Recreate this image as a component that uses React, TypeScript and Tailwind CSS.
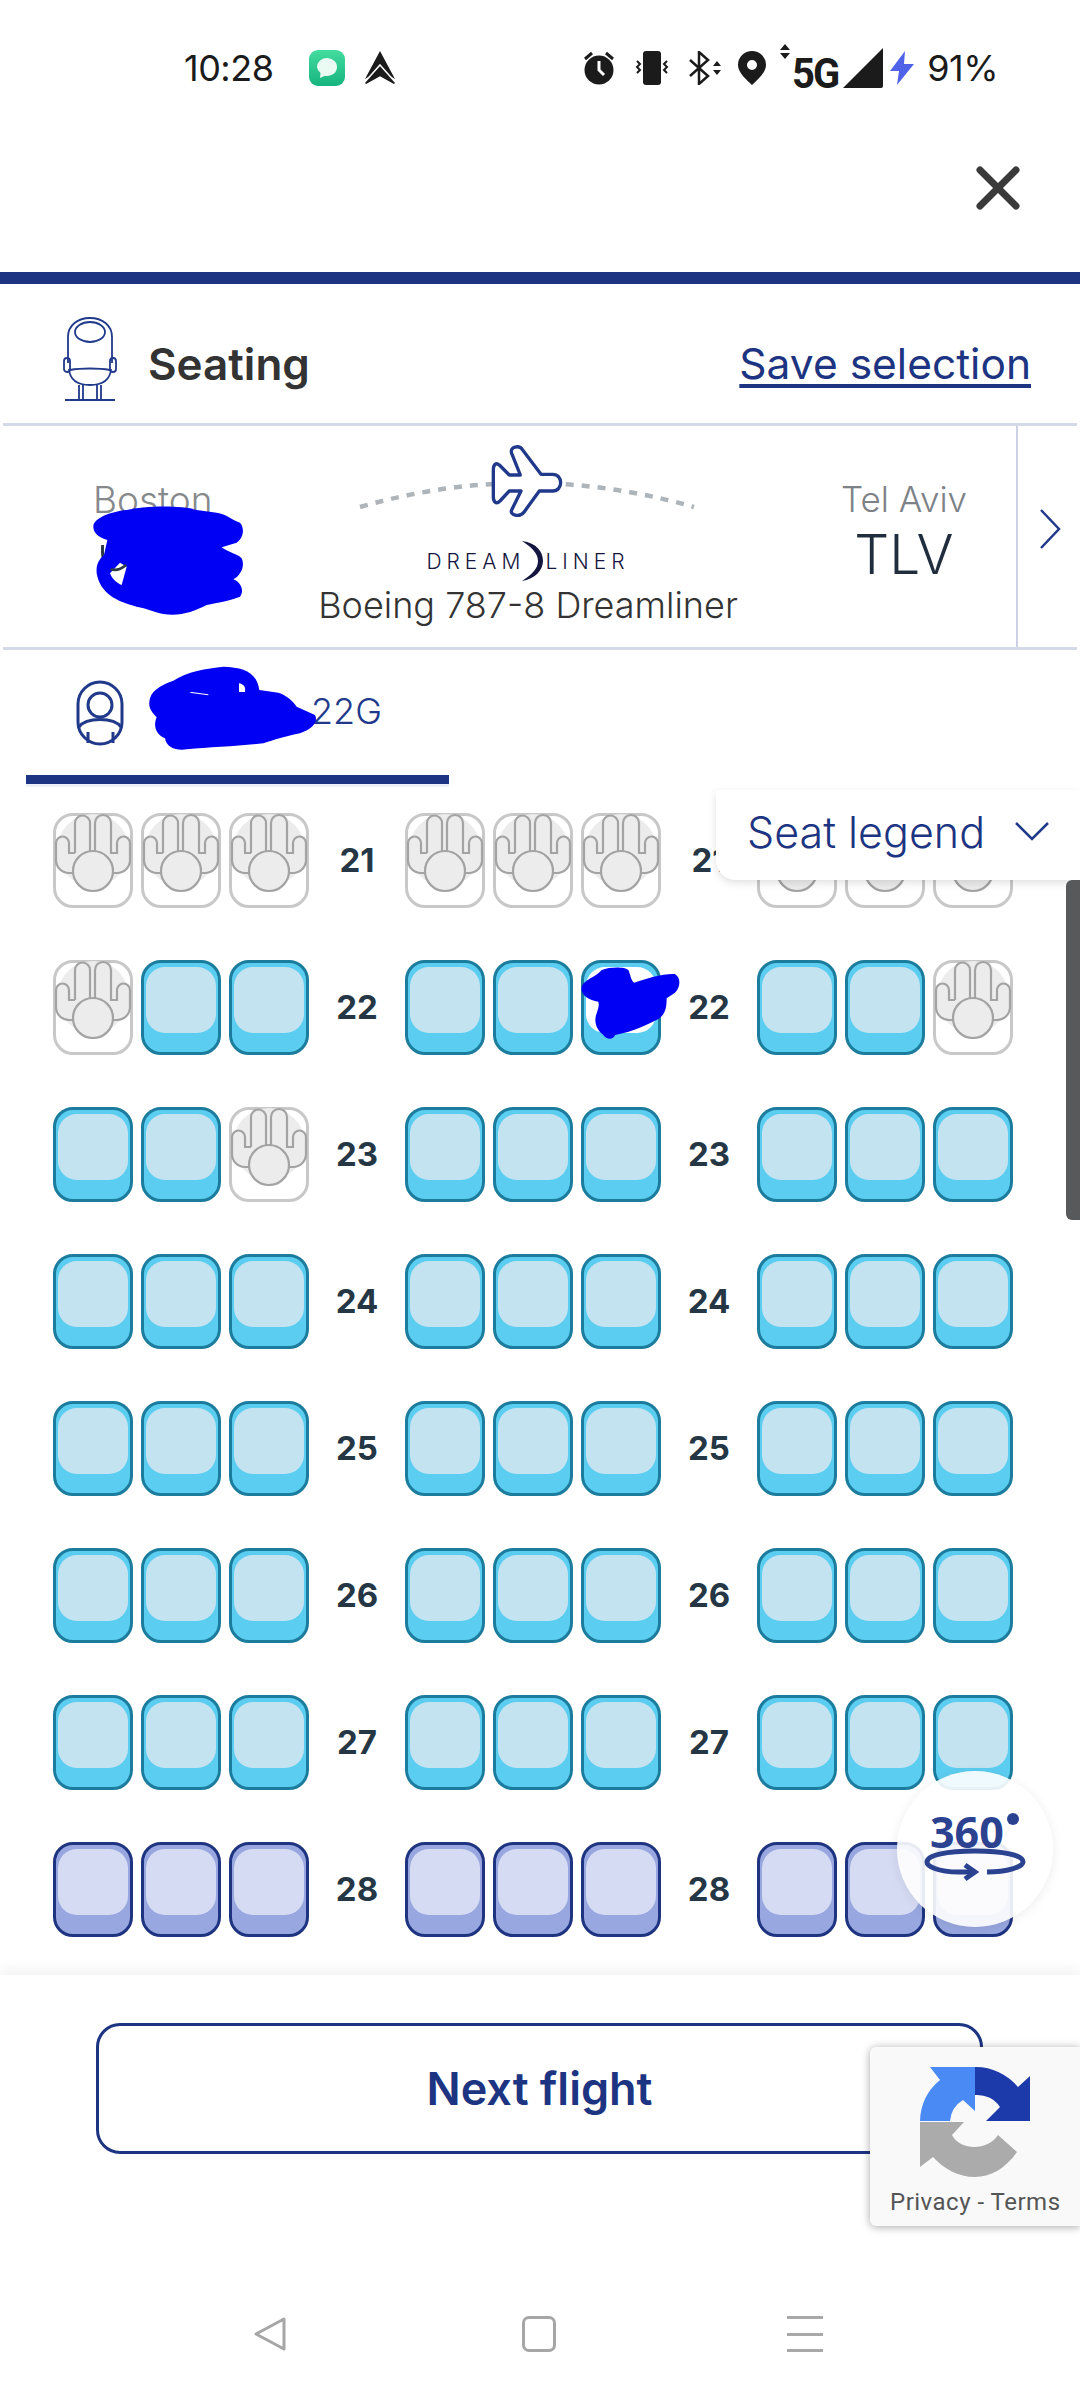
import React from "react";

type Kind = "o" | "b" | "n" | "s";

function HandSeat() {
  return (
    <div className="relative w-[80px] h-[95px] shrink-0 rounded-[20px] border-[3px] border-[#c8c8c8] bg-white">
      <svg viewBox="0 0 80 95" className="absolute left-[-3px] top-[-3px] w-[80px] h-[95px]">
        <circle cx="40" cy="37" r="36" fill="#ececec" />
        <path
          d="M22 40V10a7.500 7.500 0 0 1 15 0V40M42 40V10a8 8 0 0 1 16 0V40H64V30a6.500 6.500 0 0 1 13 0V47a13 13 0 0 1-13 13H60M22 40H16V30a6.500 6.500 0 0 0-13 0V47a13 13 0 0 0 13 13H20"
          fill="#ececec"
          stroke="#a3a3a3"
          strokeWidth="2.200"
        />
        <circle cx="40" cy="58" r="20" fill="#ececec" stroke="#a3a3a3" strokeWidth="2.200" />
      </svg>
    </div>
  );
}

function Seat({ kind }: { kind: Kind }) {
  if (kind === "o") return <HandSeat />;
  if (kind === "n") {
    return (
      <div className="w-[80px] h-[95px] shrink-0 rounded-[20px] border-[3px] border-[#1f3480] bg-[#98a7e0] px-[2px] pt-[4px]">
        <div className="h-[66px] rounded-[19px] bg-[#d5dbf3]" />
      </div>
    );
  }
  return (
    <div className="w-[80px] h-[95px] shrink-0 rounded-[20px] border-[3px] border-[#1b7c9d] bg-[#5bcdf0] px-[2px] pt-[4px]">
      <div className={kind === "s" ? "h-[66px] rounded-[19px] bg-white" : "h-[66px] rounded-[19px] bg-[#c3e3f0]"} />
    </div>
  );
}

const rows: { n: number; s: Kind[] }[] = [
  { n: 21, s: ["o", "o", "o", "o", "o", "o", "o", "o", "o"] },
  { n: 22, s: ["o", "b", "b", "b", "b", "s", "b", "b", "o"] },
  { n: 23, s: ["b", "b", "o", "b", "b", "b", "b", "b", "b"] },
  { n: 24, s: ["b", "b", "b", "b", "b", "b", "b", "b", "b"] },
  { n: 25, s: ["b", "b", "b", "b", "b", "b", "b", "b", "b"] },
  { n: 26, s: ["b", "b", "b", "b", "b", "b", "b", "b", "b"] },
  { n: 27, s: ["b", "b", "b", "b", "b", "b", "b", "b", "b"] },
  { n: 28, s: ["n", "n", "n", "n", "n", "n", "n", "n", "n"] },
];

function SeatRow({ n, s }: { n: number; s: Kind[] }) {
  const label = (
    <div className="w-[96px] shrink-0 text-center text-[33px] font-bold text-[#253745] leading-[95px]">{n}</div>
  );
  return (
    <div className="flex h-[95px] mb-[52px] pl-[53px]">
      <div className="flex gap-[8px]">
        {s.slice(0, 3).map((k, i) => (
          <Seat key={i} kind={k} />
        ))}
      </div>
      {label}
      <div className="flex gap-[8px]">
        {s.slice(3, 6).map((k, i) => (
          <Seat key={i} kind={k} />
        ))}
      </div>
      {label}
      <div className="flex gap-[8px]">
        {s.slice(6, 9).map((k, i) => (
          <Seat key={i} kind={k} />
        ))}
      </div>
    </div>
  );
}

function StatusBar() {
  return (
    <div className="h-[136px] flex items-center pl-[184px] pr-[82px] text-[#1b1b1b]">
      <span className="text-[36px] leading-none w-[88px] tracking-[-0.5px]">10:28</span>
      <svg viewBox="0 0 36 36" className="ml-[37px] w-[36px] h-[36px]">
        <defs>
          <linearGradient id="msg" x1="0" y1="0" x2="0" y2="1">
            <stop offset="0" stopColor="#43dca0" />
            <stop offset="1" stopColor="#17b47f" />
          </linearGradient>
        </defs>
        <rect width="36" height="36" rx="9" fill="url(#msg)" />
        <path d="M8 17a10 9 0 1 1 8 8.800L11 28l.5-5A9 9 0 0 1 8 17Z" fill="#e9fbf3" />
      </svg>
      <svg viewBox="0 0 34 34" className="ml-[18px] w-[34px] h-[34px]">
        <path d="M17 0 32 28 17 19 2 28Z" fill="#1b1b1b" />
        <path d="M17 14 33 32 31 34 17 26 3 34 1 32Z" fill="#1b1b1b" stroke="#fff" strokeWidth="1.500" />
      </svg>
      <div className="ml-auto flex items-center">
        <svg viewBox="0 0 32 34" className="w-[32px] h-[34px]">
          <circle cx="16" cy="19" r="14.500" fill="#1b1b1b" />
          <path d="M16 10v9l5 5" stroke="#fff" strokeWidth="3" fill="none" />
          <path d="M2 8l7-6M30 8l-7-6" stroke="#1b1b1b" strokeWidth="3" />
        </svg>
        <svg viewBox="0 0 36 34" className="ml-[19px] w-[36px] h-[34px]">
          <rect x="9" y="0" width="18" height="34" rx="3" fill="#1b1b1b" />
          <path d="M3 10l3 3-3 3 3 3-3 3M33 10l-3 3 3 3-3 3 3 3" stroke="#1b1b1b" strokeWidth="2" fill="none" />
        </svg>
        <svg viewBox="0 0 34 34" className="ml-[18px] w-[34px] h-[34px]">
          <path d="M2 9l18 16-9 8V1l9 8-18 16" stroke="#1b1b1b" strokeWidth="2.500" fill="none" />
          <path d="M25 15l4-5 4 5ZM25 19l4 5 4-5Z" fill="#1b1b1b" />
        </svg>
        <svg viewBox="0 0 28 34" className="ml-[16px] w-[28px] h-[34px]">
          <path fillRule="evenodd" d="M14 0a14 14 0 0 1 14 14c0 8-9 15-14 20C9 29 0 22 0 14A14 14 0 0 1 14 0Zm0 9a5 5 0 1 0 0 10 5 5 0 0 0 0-10Z" fill="#1b1b1b" />
        </svg>
        <div className="relative ml-[14px] w-[68px] h-[40px] mr-[-5px]">
          <svg viewBox="0 0 10 15" className="absolute left-0 top-[-4px] w-[10px] h-[15px]">
            <path d="M0 6l5-6 5 6ZM0 9l5 6 5-6Z" fill="#1b1b1b" />
          </svg>
          <span className="absolute left-[12px] top-[5px] text-[42px] leading-[42px] font-bold tracking-[-2px] [font-family:'Roboto',sans-serif] scale-x-[0.95] origin-left">
            5G
          </span>
        </div>
        <svg viewBox="0 0 40 40" className="w-[40px] h-[40px]">
          <path d="M40 0V38a2 2 0 0 1-2 2H0Z" fill="#1b1b1b" />
        </svg>
        <svg viewBox="0 0 24 34" className="ml-[7px] w-[24px] h-[34px]">
          <path d="M15 0 0 20h9l-2 14 17-21h-10Z" fill="#4f62e8" />
        </svg>
        <span className="ml-[13px] text-[36px] leading-none tracking-[-0.5px]">91%</span>
      </div>
    </div>
  );
}

function PlaneArc() {
  return (
    <svg viewBox="0 0 340 76" className="w-[340px] h-[76px]">
      <path d="M2 62Q168 14 336 62" fill="none" stroke="#aeb5ba" strokeWidth="4.500" strokeDasharray="8 8" />
      <g transform="translate(133 0) scale(0.3333)">
        <path
          d="M480 20 510 50H543L517 -15C510 -35 540 -42 550 -25L605 48H640C672 48 672 98 640 98H600L555 160C540 180 510 170 517 155L545 98H510L482 128C470 140 462 130 462 115V35C462 18 470 12 480 20Z"
          transform="translate(-455 40)"
          fill="#fff"
          stroke="#20398a"
          strokeWidth="10"
          strokeLinejoin="round"
        />
      </g>
    </svg>
  );
}

export default function App() {
  return (
    <div className="relative w-[1080px] h-[2400px] overflow-hidden bg-white [font-family:Inter,sans-serif]">
      <StatusBar />
      <div className="h-[136px] flex items-center justify-end pr-[60px]">
        <svg viewBox="0 0 44 44" className="w-[44px] h-[44px] mt-[-32px]">
          <path d="M4 4 40 40M40 4 4 40" stroke="#3a3a3a" strokeWidth="7" strokeLinecap="round" />
        </svg>
      </div>
      <div className="h-[12px] bg-[#1c3481]" />

      <div className="h-[139px] flex items-center justify-between pl-[63px] pr-[49px] pt-[11px]">
        <div className="flex items-center">
          <svg viewBox="0 0 54 84" className="w-[54px] h-[84px]">
            <g fill="none" stroke="#20398a" strokeWidth="1.800">
              <path d="M5 46V20C5 8 15 1 27 1s22 7 22 19V46" />
              <ellipse cx="27" cy="15" rx="15" ry="10" />
              <rect x="1" y="41" width="6" height="14" rx="3" />
              <rect x="47" y="41" width="6" height="14" rx="3" />
              <path d="M6 52C7 64 16 68 27 68s20-4 21-16M7 53C18 51 36 51 47 53" />
              <path d="M16 68V83M20 68V83M34 68V83M38 68V83M2 83H52" />
            </g>
          </svg>
          <span className="ml-[31px] mt-[10px] text-[44px] font-semibold text-[#333] leading-none">Seating</span>
        </div>
        <span className="mt-[11px] text-[42.500px] text-[#1c3481] leading-none underline underline-offset-[5px] decoration-[4px]">Save selection</span>
      </div>
      <div className="mx-[3px] h-[3px] bg-[#d5d9e8]" />

      <div className="h-[221px] flex">
        <div className="w-[318px] shrink-0 pl-[93px] pt-[54px] text-[37px] leading-[40px] text-[#85898c] font-light">Boston</div>
        <div className="w-[420px] shrink-0 flex flex-col items-center pt-[19px]">
          <PlaneArc />
          <div className="mt-[20px] flex items-center h-[40px] text-[#14163f] text-[21px] leading-none tracking-[5px] font-light">
            <span>DREAM</span>
            <svg viewBox="0 0 25 40" className="w-[25px] h-[40px] mx-[-6px]">
              <path d="M3 0C18 2 24 11 24 20S16 38 3 40C12 34 19 28 19 20S12 6 3 0Z" fill="#14163f" />
            </svg>
            <span className="ml-[7px]">LINER</span>
          </div>
          <div className="mt-[3px] text-[36px] leading-[42px] text-[#333] font-light whitespace-nowrap">Boeing 787-8 Dreamliner</div>
        </div>
        <div className="w-[278px] shrink-0 flex flex-col items-center pl-[54px] pt-[53px]">
          <span className="text-[35px] leading-[40px] text-[#7c8286] font-light">Tel Aviv</span>
          <span className="text-[55px] leading-[70px] text-[#1f2d3d] font-light">TLV</span>
        </div>
        <div className="flex-1 border-l-[2px] border-[#ccd2e3] flex items-center pl-[21px]">
          <svg viewBox="0 0 22 42" className="w-[22px] h-[42px] mt-[-16px]">
            <path d="M2 2 20 21 2 40" fill="none" stroke="#20398a" strokeWidth="2.500" />
          </svg>
        </div>
      </div>
      <div className="mx-[3px] h-[3px] bg-[#d5d9e8]" />

      <div className="h-[137px] pl-[26px]">
        <div className="h-[134px] w-[423px] border-b-[9px] border-[#1c3481] shadow-[0_3px_0_#eef0f8] flex items-center pl-[50px]">
          <svg viewBox="0 0 48 66" className="w-[48px] h-[66px]">
            <g fill="none" stroke="#20398a" strokeWidth="3">
              <rect x="2" y="2" width="44" height="62" rx="22" />
              <circle cx="24" cy="25" r="12" />
              <path d="M3 47C10 37 38 37 45 47M12 52V63M37 52V63" />
            </g>
          </svg>
          <span className="ml-[187px] mt-[-4px] text-[36px] leading-none text-[#20398a] font-light">22G</span>
        </div>
      </div>

      <div className="h-[1188px] overflow-hidden pt-[26px]">
        {rows.map((r) => (
          <SeatRow key={r.n} n={r.n} s={r.s} />
        ))}
      </div>

      <div className="relative h-[425px] bg-white shadow-[0_-6px_12px_rgba(0,0,0,0.05)]">
        <div className="pt-[48px] pl-[96px]">
          <div className="w-[887px] h-[131px] rounded-[24px] border-[3px] border-[#1c3481] flex items-center justify-center text-[45px] font-semibold text-[#1c3481]">
            Next flight
          </div>
        </div>
        <div className="mt-[162px] flex items-center h-[36px] pl-[253px]">
          <svg viewBox="0 0 35 36" className="w-[35px] h-[36px]">
            <path d="M31 3 3 18l28 15Z" fill="none" stroke="#a6a6a6" strokeWidth="3" strokeLinejoin="round" />
          </svg>
          <div className="ml-[234px] w-[34px] h-[36px] rounded-[7px] border-[3px] border-[#a6a6a6]" />
          <div className="ml-[231px] w-[36px] h-[36px] flex flex-col justify-between">
            <div className="h-[3px] bg-[#a8a8a8]" />
            <div className="h-[3px] bg-[#a8a8a8]" />
            <div className="h-[3px] bg-[#a8a8a8]" />
          </div>
        </div>
      </div>

      <svg viewBox="0 0 540 405" className="absolute left-[80px] top-[490px] w-[180px] h-[135px]">
        <path d="M68 165Q66 190 70 205" fill="none" stroke="#2b3a44" strokeWidth="9" />
        <path
          d="M40 110C40 85 90 65 140 60C190 48 300 45 350 60L410 68C440 72 455 90 480 98C495 115 490 145 470 158L425 172C450 190 470 190 485 205C495 225 485 255 460 268C480 275 495 300 480 320C440 335 400 340 380 345C340 365 300 380 250 372C220 365 200 355 170 350C110 335 60 310 50 250C48 225 55 210 72 195L82 150C50 140 40 125 40 110Z"
          fill="#0000f5"
        />
        <path d="M90 250 120 218 140 230 125 285C110 280 95 265 90 250Z" fill="#fff" />
        <path d="M92 238Q115 245 138 225" fill="none" stroke="#2b3a44" strokeWidth="8" />
      </svg>
      <svg viewBox="0 0 1020 300" className="absolute left-[60px] top-[660px] w-[340px] h-[100px]">
        <path
          d="M268 125C270 95 300 75 340 62C380 35 440 25 490 20C550 22 590 35 598 90L655 98C680 105 700 125 710 140L765 165C775 185 760 205 720 220C680 228 640 240 610 250C540 258 450 262 380 268C350 272 320 265 315 235C290 225 278 200 290 172C275 155 266 145 268 125Z"
          fill="#0000f5"
        />
        <path d="M388 98 445 106V103L395 96ZM537 70C550 72 558 80 555 96H537Z" fill="#fff" />
      </svg>
      <svg viewBox="0 0 600 360" className="absolute left-[560px] top-[950px] w-[200px] h-[120px]">
        <path
          d="M65 110C70 90 110 80 125 60C150 50 195 50 205 60C212 75 212 90 222 98C260 85 310 70 345 72C365 85 360 115 345 128L320 145C320 175 315 195 295 207C260 225 220 245 165 255C160 270 140 270 130 255C110 240 100 215 110 190C115 175 118 165 115 155C85 150 60 135 65 110Z"
          fill="#0000f5"
        />
      </svg>

      <div className="absolute left-[716px] top-[790px] w-[364px] h-[90px] rounded-bl-[20px] bg-white shadow-[0_3px_8px_rgba(0,0,0,0.12)] flex items-center pl-[31px]">
        <span className="mt-[-6px] text-[43px] leading-none text-[#1c3481] font-light whitespace-nowrap">Seat legend</span>
        <svg viewBox="0 0 36 20" className="absolute left-[298px] top-[31px] w-[36px] h-[20px]">
          <path d="M2 2 18 18 34 2" fill="none" stroke="#20398a" strokeWidth="2.500" />
        </svg>
      </div>

      <div className="absolute left-[1066px] top-[880px] w-[14px] h-[340px] rounded-l-[6px] bg-[#58595b]" />

      <div className="absolute left-[897px] top-[1771px] w-[156px] h-[156px] rounded-full bg-white/90 shadow-[0_2px_12px_rgba(0,0,0,0.08)]">
        <span className="absolute left-[33px] top-[39px] text-[43px] leading-none font-bold text-[#2b4291] [font-family:'Open_Sans',sans-serif]">360</span>
        <svg viewBox="0 0 156 156" className="absolute left-0 top-0 w-[156px] h-[156px]">
          <circle cx="116" cy="48" r="6" fill="#2b4291" />
          <g fill="none" stroke="#2b4291" strokeWidth="5">
            <path d="M78 101H62C40 101 30 95 30 91C30 84 50 80 78 80S126 84 126 91C126 96 110 101 90 101" />
            <path d="M68 94 78 101 68 108" />
          </g>
        </svg>
      </div>

      <div className="absolute left-[870px] top-[2047px] w-[210px] h-[179px] rounded-l-[6px] bg-[#f9f9f9] shadow-[0_1px_8px_rgba(0,0,0,0.35)]">
        <svg viewBox="0 0 110 110" className="absolute left-[50px] top-[20px] w-[110px] h-[110px]">
          <path d="M0 54A55 55 0 0 1 20 13L10 0H55V44L43 33A27 27 0 0 0 30 54Z" fill="#4a8af4" />
          <path d="M55 0A55 55 0 0 1 98 20L110 9V54H66L80 40A27 27 0 0 0 55 28Z" fill="#1c3aa9" />
          <path d="M0 55H44L32 68C40 84 68 84 78 68L97 85C85 102 70 110 55 110C38 110 24 102 13 90L0 100Z" fill="#ababab" />
        </svg>
        <span className="absolute left-[20px] top-[141px] text-[24px] leading-[28px] tracking-[0.5px] whitespace-nowrap text-[#555] [font-family:Roboto,sans-serif]">
          Privacy - Terms
        </span>
      </div>
    </div>
  );
}
